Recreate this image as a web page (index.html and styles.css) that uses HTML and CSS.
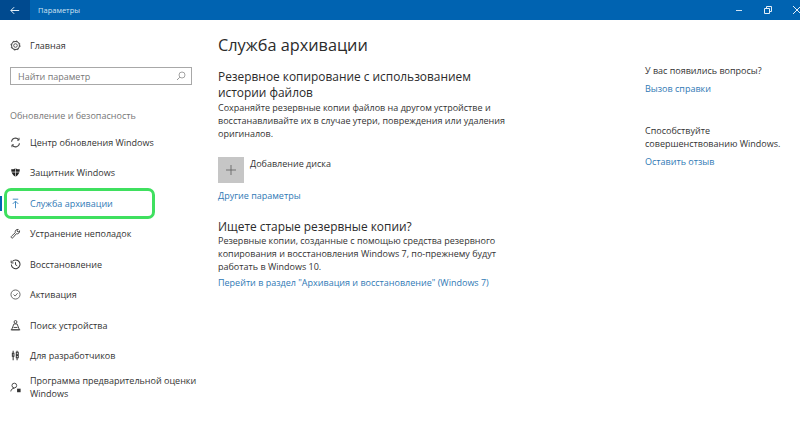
FILE: index.html
```html
<!DOCTYPE html>
<html lang="ru">
<head>
<meta charset="utf-8">
<title>Параметры</title>
<link rel="stylesheet" href="styles.css">
</head>
<body>
<header class="titlebar">
  <div class="back"><svg width="10" height="9" viewBox="0 0 12 10"><path d="M5 1 1 5l4 4M1 5h10" fill="none" stroke="#e4eff8" stroke-width="1.2"/></svg></div>
  <div class="app-title">Параметры</div>
  <div class="win-btns">
    <svg width="10" height="10" viewBox="0 0 10 10"><path d="M2 5.500h6" stroke="#cfe2f2" stroke-width="1"/></svg>
    <svg width="10" height="10" viewBox="0 0 10 10"><path d="M1.500 3.500h5v5h-5zM3.500 3.500v-2h5v5h-2" fill="none" stroke="#e4eff8" stroke-width="1"/></svg>
    <svg width="10" height="10" viewBox="0 0 10 10"><path d="M1 1l8 8M9 1l-8 8" stroke="#e4eff8" stroke-width="1"/></svg>
  </div>
</header>
<div class="layout">
  <nav class="sidebar">
    <div class="home">
      <svg class="ico" viewBox="0 0 14 14"><circle cx="7" cy="7" r="2.300" fill="none" stroke="#444" stroke-width="1.100"/><circle cx="7" cy="7" r="5" fill="none" stroke="#444" stroke-width="1.300"/><circle cx="7" cy="7" r="5.800" fill="none" stroke="#444" stroke-width="1.200" stroke-dasharray="2 2.550"/></svg>
      <span>Главная</span>
    </div>
    <div class="search"><span>Найти параметр</span>
      <svg width="10" height="10" viewBox="0 0 10 10"><circle cx="6" cy="4" r="3" fill="none" stroke="#999" stroke-width=".9"/><path d="M3.800 6.200 1 9" stroke="#999" stroke-width="1"/></svg>
    </div>
    <div class="group">Обновление и безопасность</div>
    <ul class="menu">
      <li><svg class="ico" viewBox="0 0 14 14"><path d="M2 6a5 5 0 0 1 9-2.500M12 8a5 5 0 0 1-9 2.500" fill="none" stroke="#444" stroke-width="1.300"/><path d="M11.500 1v3H9M2.500 13v-3H5" fill="none" stroke="#444" stroke-width="1.200"/></svg>Центр обновления Windows</li>
      <li><svg class="ico" viewBox="0 0 14 14"><path d="M7 1.500c1.500 1 3.500 1.500 5.500 1.500 0 4.500-2 8-5.500 9.500C3.500 11 1.500 7.500 1.500 3 3.500 3 5.500 2.500 7 1.500z" fill="#222"/><path d="M7 1.500v11M1.500 6.500h11" stroke="#fff" stroke-width=".8"/></svg>Защитник Windows</li>
      <li class="active"><svg class="ico" viewBox="0 0 14 14"><path d="M3.500 1.500h7M7 13V4M3.500 7.500 7 4l3.500 3.500" fill="none" stroke="#3b86c0" stroke-width="1.200"/></svg>Служба архивации</li>
      <li><svg class="ico" viewBox="0 0 14 14"><path d="M2 12.500c-1-1-.6-1.500 0-2.100L6.700 6c-.7-2.500 1-4.500 3.800-4.200L8.700 3.700l1.600 1.600 1.900-1.800c.3 2.700-1.700 4.500-4.200 3.800L3.600 12.500c-.6.600-1 .7-1.600 0z" fill="none" stroke="#444" stroke-width="1.200"/></svg>Устранение неполадок</li>
      <li><svg class="ico" viewBox="0 0 14 14"><path d="M3 3.200A5.500 5.500 0 1 1 1.700 7" fill="none" stroke="#333" stroke-width="1.300"/><path d="M1.500 2v3h3M7 4v3.300l2.200 1.300" fill="none" stroke="#333" stroke-width="1.200"/></svg>Восстановление</li>
      <li><svg class="ico" viewBox="0 0 14 14"><circle cx="7" cy="7" r="5.800" fill="none" stroke="#555" stroke-width="1.100"/><path d="M4.500 7l2 2 3.200-3.600" fill="none" stroke="#555" stroke-width="1.100"/></svg>Активация</li>
      <li><svg class="ico" viewBox="0 0 14 14"><circle cx="7" cy="2.500" r="1.800" fill="none" stroke="#444" stroke-width="1.200"/><path d="M5 5h4l3 7.500H2zM1 12.500h12M4.500 9.500h5" fill="none" stroke="#444" stroke-width="1.200"/></svg>Поиск устройства</li>
      <li><svg class="ico" viewBox="0 0 14 14"><path d="M4 1v3M3 4h2v4H3zM4 8v5M9 1v2M8 3h2.500v3H8zM8 7h2.500v3H8zM9 10v3" fill="none" stroke="#333" stroke-width="1.300"/></svg>Для разработчиков</li>
      <li class="double"><svg class="ico" viewBox="0 0 14 14"><circle cx="5.500" cy="4.500" r="3" fill="none" stroke="#444" stroke-width="1.200"/><path d="M1 12c.4-2.500 2-4 4.500-4" fill="none" stroke="#444" stroke-width="1.200"/><rect x="9" y="8.500" width="4.500" height="4.500" fill="#333"/></svg><span>Программа предварительной оценки Windows</span></li>
    </ul>
  </nav>
  <main class="content">
    <h1>Служба архивации</h1>
    <h2>Резервное копирование с использованием истории файлов</h2>
    <p>Сохраняйте резервные копии файлов на другом устройстве и восстанавливайте их в случае утери, повреждения или удаления оригиналов.</p>
    <div class="add">
      <div class="tile"><svg width="10" height="10" viewBox="0 0 10 10"><path d="M5 0v10M0 5h10" stroke="#666" stroke-width=".9"/></svg></div>
      <span>Добавление диска</span>
    </div>
    <a class="link more">Другие параметры</a>
    <h3>Ищете старые резервные копии?</h3>
    <p>Резервные копии, созданные с помощью средства резервного копирования и восстановления Windows 7, по-прежнему будут работать в Windows 10.</p>
    <a class="link go">Перейти в раздел "Архивация и восстановление" (Windows 7)</a>
  </main>
  <aside class="side">
    <div class="q">У вас появились вопросы?</div>
    <a class="link">Вызов справки</a>
    <div class="q improve">Способствуйте совершенствованию Windows.</div>
    <a class="link">Оставить отзыв</a>
  </aside>
</div>
<div class="highlight"></div>
</body>
</html>
```
FILE: styles.css
```css
* { box-sizing: border-box; }
html, body { margin: 0; height: 100%; }
body {
  width: 800px;
  height: 421px;
  overflow: hidden;
  background: #fff;
  color: #333;
  font-family: "Open Sans", "Noto Sans", sans-serif;
  font-size: 9px;
  position: relative;
}
.titlebar {
  height: 20px;
  background: #0063b1;
  display: flex;
  align-items: center;
  color: #cfe2f2;
}
.back {
  width: 30px;
  height: 20px;
  background: #004a8f;
  display: flex;
  align-items: center;
  justify-content: center;
}
.app-title { margin-left: 8px; font-size: 7.500px; }
.win-btns {
  margin-left: auto;
  display: flex;
  gap: 19px;
  margin-right: -2px;
}
.layout { display: flex; }
.sidebar { width: 218px; padding-left: 10px; flex: none; }
.home { display: flex; align-items: center; height: 14px; margin-top: 18px; }
.ico { flex: none; width: 11px; height: 11px; margin-right: 9px; }
.search {
  width: 182px;
  height: 18px;
  margin-top: 15px;
  border: 1px solid #a8a8a8;
  display: flex;
  align-items: center;
  justify-content: space-between;
  padding: 0 5px 0 7px;
  color: #777;
}
.group { margin-top: 24px; color: #777; }
.menu { list-style: none; margin: 5px 0 0; padding: 0; }
.menu li { display: flex; align-items: center; height: 30.500px; }
.menu li.active { color: #2f79b5; position: relative; }
.menu li.active::before {
  content: "";
  position: absolute;
  left: -10px;
  top: 8px;
  width: 2px;
  height: 15px;
  background: #0063b1;
}
.menu li.double { line-height: 13px; height: 30px; margin-top: 1px; width: 200px; }
.content { width: 290px; flex: none; }
h1 { font-weight: 400; font-size: 16.300px; line-height: 20px; margin: 15px 0 0; color: #2b2b2b; }
h2 { font-weight: 400; font-size: 11.900px; line-height: 16px; margin: 13px 0 1px; color: #2b2b2b; }
h3 { font-weight: 400; font-size: 11.900px; line-height: 16px; margin: 16px 0 0; color: #2b2b2b; }
p { margin: 0; line-height: 13px; }
.add { display: flex; margin-top: 17px; }
.tile {
  width: 26px;
  height: 26px;
  background: #c6c6c6;
  display: flex;
  align-items: center;
  justify-content: center;
  margin-right: 6px;
}
.add span { line-height: 13px; }
.link { display: block; color: #2f79b5; line-height: 13px; }
.more { margin-top: 6px; }
.go { margin-top: 3px; }
.side { margin-left: 137px; width: 150px; padding-top: 44px; line-height: 13px; }
.side .link { margin-top: 4.500px; }
.improve { margin-top: 29.500px; }
.highlight {
  position: absolute;
  left: 4px;
  top: 188px;
  width: 151px;
  height: 31px;
  border: 3px solid #3fe05f;
  border-radius: 7px;
}
```
